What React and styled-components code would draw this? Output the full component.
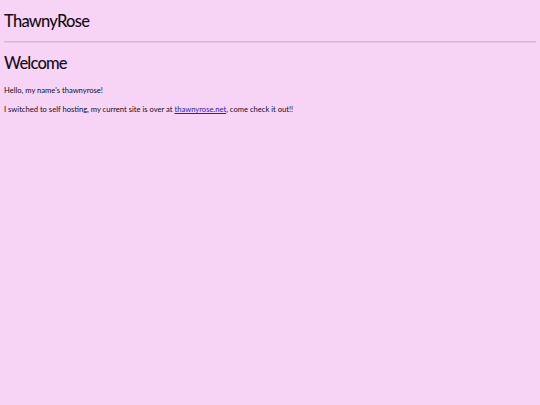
import styled, { createGlobalStyle } from 'styled-components'

const GlobalStyle = createGlobalStyle`
    html, body {
        margin: 0;
        background: #f7d4f6;
    }
    body {
        padding: 4px;
        font-family: Lato, "Open Sans", sans-serif;
        color: #150f1a;
    }
`

const Header = styled.header`
    padding-top: 6px;
`

const SiteName = styled.div`
    font-size: 16.5px;
    line-height: 22px;
    letter-spacing: -0.75px;
    font-weight: 500;
`

const Rule = styled.hr`
    margin: 9px 0 0;
    border: 0;
    height: 1px;
    background: #d8b6d8;
    box-shadow: 0 1px 0 #e6c4e5;
`

const Main = styled.main`
    padding-top: 9px;
`

const Title = styled.h1`
    margin: 0 0 10px;
    font-size: 16.5px;
    line-height: 24px;
    font-weight: 500;
    letter-spacing: -0.8px;
`

const Para = styled.p`
    margin: 0 0 8px;
    font-size: 7.6px;
    line-height: 11px;
`

const Link = styled.a`
    color: #2a20c8;
`

export default function App() {
    return (
        <>
            <GlobalStyle />
            <Header>
                <SiteName>ThawnyRose</SiteName>
                <Rule />
            </Header>
            <Main>
                <Title>Welcome</Title>
                <Para>Hello, my name's thawnyrose!</Para>
                <Para>
                    I switched to self hosting, my current site is over at{' '}
                    <Link href="#">thawnyrose.net</Link>, come check it out!!
                </Para>
            </Main>
        </>
    )
}
